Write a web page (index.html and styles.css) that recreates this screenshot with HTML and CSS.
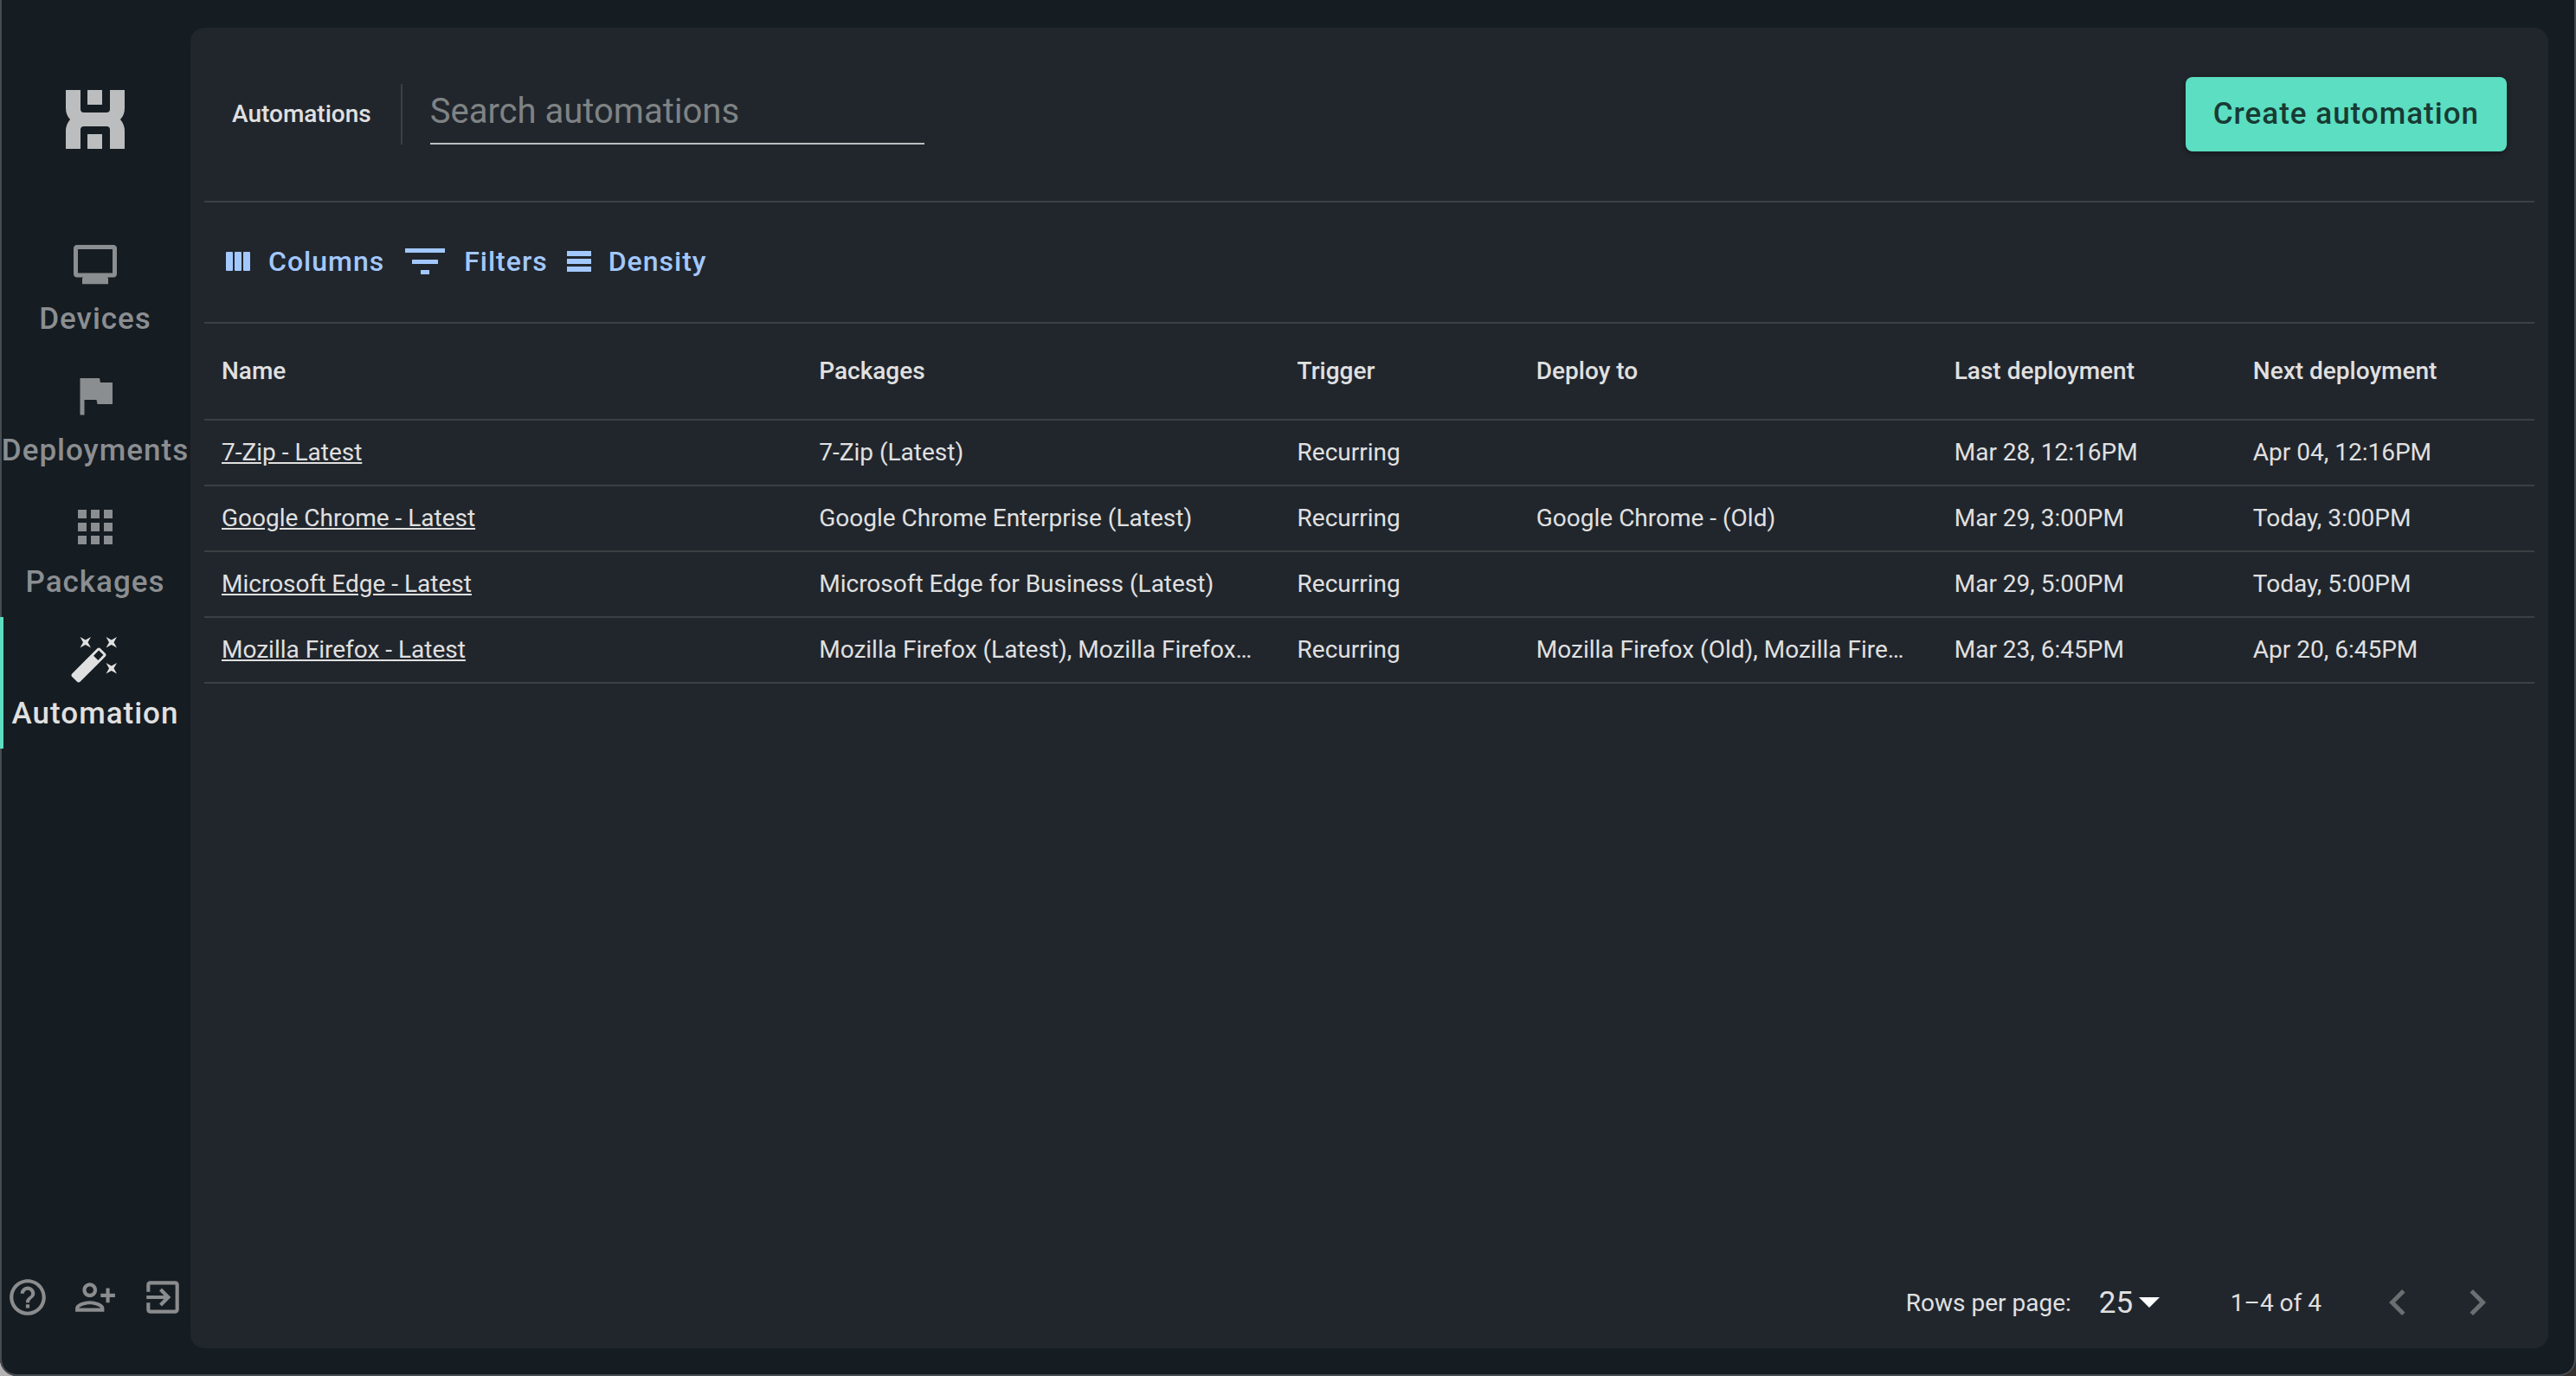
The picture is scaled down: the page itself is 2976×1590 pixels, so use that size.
FILE: index.html
```html
<!DOCTYPE html>
<html lang="en">
<head>
  <meta charset="UTF-8">
  <meta name="viewport" content="width=device-width, initial-scale=1.0">
  <title>Automations</title>
  <link rel="stylesheet" href="styles.css">
</head>
<body>

<div class="window">
  <!-- Sidebar -->
  <aside class="sidebar">
    <a href="#" class="logo" aria-label="Home">
      <svg width="68" height="68" viewBox="0 0 68 68">
        <path d="M0 0H17V22Q17 26 21 26H47Q51 26 51 22V0H68V21Q68 29 63 34Q68 40 68 47V68H51V46Q51 42 47 42H21Q17 42 17 46V68H0V47Q0 40 5 34Q0 29 0 21Z"/>
        <path d="M25 0H42V17H25ZM25 51H42V68H25Z"/>
      </svg>
    </a>

    <nav class="nav">
      <a href="#" class="nav-item">
        <svg class="icon" viewBox="0 0 24 24"><path d="M20.500 3.200h-17C2.700 3.200 2 3.900 2 4.700v12c0 .8.700 1.500 1.500 1.500h2.900L6 18.700v2.600h12v-2.600l-.4-.5h2.900c.8 0 1.500-.7 1.500-1.500v-12C22 3.900 21.300 3.200 20.500 3.200zM20 16.200H4v-11h16v11z"/></svg>
        <span>Devices</span>
      </a>
      <a href="#" class="nav-item">
        <svg class="icon" viewBox="0 0 24 24"><path d="M14.4 6L14 4H5v17h2v-7h5.600l.4 2h7V6z"/></svg>
        <span>Deployments</span>
      </a>
      <a href="#" class="nav-item">
        <svg class="icon" viewBox="0 0 24 24"><path d="M4 8h4V4H4v4zm6 12h4v-4h-4v4zm-6 0h4v-4H4v4zm0-6h4v-4H4v4zm6 0h4v-4h-4v4zm6-10v4h4V4h-4zm-6 4h4V4h-4v4zm6 6h4v-4h-4v4zm0 6h4v-4h-4v4z"/></svg>
        <span>Packages</span>
      </a>
      <a href="#" class="nav-item active">
        <svg class="icon" viewBox="0 0 24 24"><path d="M7.5,5.6L5,7L6.4,4.5L5,2L7.5,3.4L10,2L8.6,4.5L10,7L7.5,5.6M19.5,15.4L22,14L20.6,16.5L22,19L19.5,17.6L17,19L18.4,16.5L17,14L19.5,15.4M22,2L20.6,4.5L22,7L19.5,5.6L17,7L18.4,4.5L17,2L19.5,3.4L22,2M13.34,12.78L15.78,10.34L13.66,8.22L11.22,10.66L13.34,12.78M14.37,7.29L16.71,9.63C17.1,10 17.1,10.65 16.71,11.04L5.04,22.71C4.65,23.1 4,23.1 3.63,22.71L1.29,20.37C0.9,20 0.9,19.35 1.29,18.96L12.96,7.29C13.35,6.9 14,6.9 14.37,7.29Z"/></svg>
        <span>Automation</span>
      </a>
    </nav>

    <div class="sidebar-actions">
      <button type="button" aria-label="Help">
        <svg viewBox="0 0 24 24"><path d="M11 18h2v-2h-2v2zm1-16C6.480 2 2 6.480 2 12s4.480 10 10 10 10-4.480 10-10S17.520 2 12 2zm0 18c-4.410 0-8-3.590-8-8s3.590-8 8-8 8 3.590 8 8-3.590 8-8 8zm0-14c-2.210 0-4 1.790-4 4h2c0-1.100.9-2 2-2s2 .9 2 2c0 2-3 1.750-3 5h2c0-2.250 3-2.500 3-5 0-2.210-1.790-4-4-4z"/></svg>
      </button>
      <button type="button" aria-label="Invite user">
        <svg viewBox="0 0 24 24"><path d="M13 8c0-2.210-1.790-4-4-4S5 5.790 5 8s1.790 4 4 4 4-1.790 4-4zm-2 0c0 1.100-.9 2-2 2s-2-.9-2-2 .9-2 2-2 2 .9 2 2zM1 18v2h16v-2c0-2.660-5.330-4-8-4s-8 1.340-8 4zm2 0c.2-.71 3.300-2 6-2 2.690 0 5.770 1.280 6 2H3zM20 15v-3h3v-2h-3V7h-2v3h-3v2h3v3h2z"/></svg>
      </button>
      <button type="button" aria-label="Sign out">
        <svg viewBox="0 0 24 24"><path d="M10.090 15.590L11.500 17l5-5-5-5-1.410 1.410L12.670 11H3v2h9.670l-2.580 2.590zM19 3H5c-1.110 0-2 .9-2 2v4h2V5h14v14H5v-4H3v4c0 1.100.89 2 2 2h14c1.100 0 2-.9 2-2V5c0-1.100-.9-2-2-2z"/></svg>
      </button>
    </div>
  </aside>

  <!-- Main panel -->
  <main class="panel">
    <header class="panel-header">
      <h1>Automations</h1>
      <input type="search" class="search" placeholder="Search automations" aria-label="Search automations">
      <button type="button" class="create-btn">Create automation</button>
    </header>

    <div class="toolbar">
      <button type="button">
        <svg width="30" height="22" viewBox="0 0 30 22"><rect x="1" width="8" height="22" rx="1"/><rect x="11" width="8" height="22" rx="1"/><rect x="21" width="8" height="22" rx="1"/></svg>
        Columns
      </button>
      <button type="button">
        <svg width="50" height="30" viewBox="0 0 50 30"><path d="M2 0H48V5H2ZM10 13H40V18H10ZM20 25H30V30H20Z"/></svg>
        Filters
      </button>
      <button type="button">
        <svg width="28" height="24" viewBox="0 0 28 24"><path d="M0 0H28V6H0ZM0 9H28V15H0ZM0 18H28V24H0Z"/></svg>
        Density
      </button>
    </div>

    <table class="grid">
      <colgroup>
        <col class="col-name">
        <col class="col-packages">
        <col class="col-trigger">
        <col class="col-deploy">
        <col class="col-date">
        <col class="col-date">
      </colgroup>
      <thead>
        <tr>
          <th>Name</th>
          <th>Packages</th>
          <th>Trigger</th>
          <th>Deploy to</th>
          <th>Last deployment</th>
          <th>Next deployment</th>
        </tr>
      </thead>
      <tbody>
        <tr>
          <td><a href="#">7-Zip - Latest</a></td>
          <td>7-Zip (Latest)</td>
          <td>Recurring</td>
          <td></td>
          <td>Mar 28, 12:16PM</td>
          <td>Apr 04, 12:16PM</td>
        </tr>
        <tr>
          <td><a href="#">Google Chrome - Latest</a></td>
          <td>Google Chrome Enterprise (Latest)</td>
          <td>Recurring</td>
          <td>Google Chrome - (Old)</td>
          <td>Mar 29, 3:00PM</td>
          <td>Today, 3:00PM</td>
        </tr>
        <tr>
          <td><a href="#">Microsoft Edge - Latest</a></td>
          <td>Microsoft Edge for Business (Latest)</td>
          <td>Recurring</td>
          <td></td>
          <td>Mar 29, 5:00PM</td>
          <td>Today, 5:00PM</td>
        </tr>
        <tr>
          <td><a href="#">Mozilla Firefox - Latest</a></td>
          <td>Mozilla Firefox (Latest), Mozilla Firefox…</td>
          <td>Recurring</td>
          <td>Mozilla Firefox (Old), Mozilla Fire…</td>
          <td>Mar 23, 6:45PM</td>
          <td>Apr 20, 6:45PM</td>
        </tr>
      </tbody>
    </table>

    <footer class="pagination">
      <label for="pageSize">Rows per page:</label>
      <div class="select-wrap">
        <select id="pageSize">
          <option>25</option>
          <option>50</option>
        </select>
        <svg width="24" height="12" viewBox="0 0 24 12"><path d="M0 0H24L12 12Z"/></svg>
      </div>
      <span class="range">1–4 of 4</span>
      <div class="pager">
        <button type="button" disabled aria-label="Previous page">
          <svg class="icon" viewBox="0 0 24 24"><path d="M15.410 16.590L10.830 12l4.580-4.590L14 6l-6 6 6 6 1.410-1.410z"/></svg>
        </button>
        <button type="button" disabled aria-label="Next page">
          <svg class="icon" viewBox="0 0 24 24"><path d="M8.590 16.590L13.170 12 8.590 7.410 10 6l6 6-6 6-1.410-1.410z"/></svg>
        </button>
      </div>
    </footer>
  </main>
</div>

</body>
</html>
```
FILE: styles.css
```css
* {
  box-sizing: border-box;
}
body {
  margin: 0;
  background: linear-gradient(90deg, #b4b2b2, #35312f);
  color: #e0e0e0;
  font-family: Roboto, sans-serif;
  font-size: 28px;
}
button {
  border: none;
  background: none;
  padding: 0;
  color: inherit;
  font-family: inherit;
  cursor: pointer;
}
svg {
  display: block;
  flex-shrink: 0;
  fill: currentColor;
}
.icon {
  width: 60px;
  height: 60px;
}

/* Window */
.window {
  display: flex;
  min-height: 100vh;
  padding: 32px 32px 32px 0;
  background: #151c22;
  border-radius: 0 0 20px 20px;
  box-shadow: inset 2px 0 #474c50, inset -2px 0 #474c50, inset 0 -2px #474c50;
}

/* Sidebar */
.sidebar {
  display: flex;
  flex-direction: column;
  width: 220px;
  flex-shrink: 0;
}
.logo {
  align-self: center;
  margin-top: 72px;
  color: #bbbdbf;
}
.nav {
  margin-top: 85px;
}
.nav-item {
  display: flex;
  flex-direction: column;
  align-items: center;
  gap: 12px;
  height: 152px;
  padding-top: 18px;
  color: #8b8e91;
  font-size: 35px;
  font-weight: 500;
  line-height: 44px;
  letter-spacing: 1px;
  text-decoration: none;
}
.nav-item.active {
  color: #e0e0e0;
  box-shadow: inset 4px 0 #5eddc1;
}
.sidebar-actions {
  display: flex;
  justify-content: center;
  gap: 28px;
  margin-top: auto;
  margin-bottom: 34px;
  color: #8b8c8d;
}
.sidebar-actions svg {
  width: 50px;
  height: 50px;
}

/* Main panel */
.panel {
  display: flex;
  flex-direction: column;
  flex: 1;
  min-width: 0;
  padding: 0 16px;
  background: #21262d;
  border-radius: 16px;
}
.panel-header {
  display: flex;
  align-items: center;
  height: 202px;
  padding: 0 32px;
  border-bottom: 2px solid #3b4043;
}
h1 {
  margin: 0;
  padding-right: 34px;
  border-right: 2px solid #3b4043;
  font-size: 28px;
  font-weight: 500;
  line-height: 70px;
}
.search {
  width: 571px;
  height: 70px;
  margin-left: 32px;
  padding: 0 0 6px;
  border: none;
  border-bottom: 2px solid #bcbec0;
  background: none;
  color: #e0e0e0;
  font-family: inherit;
  font-size: 40px;
  outline: none;
}
.search::placeholder {
  color: #7f8384;
  opacity: 1;
}
.create-btn {
  height: 86px;
  margin-left: auto;
  padding: 0 32px 2px;
  border-radius: 8px;
  background: #5bdec1;
  box-shadow: 0 2px 6px rgba(0, 0, 0, 0.4);
  color: #183a33;
  font-size: 35px;
  font-weight: 500;
  letter-spacing: 1px;
}

/* Toolbar */
.toolbar {
  display: flex;
  align-items: center;
  gap: 22px;
  height: 140px;
  padding: 0 24px 2px;
  border-bottom: 2px solid #3b4043;
  color: #a3c8ff;
}
.toolbar button {
  display: flex;
  align-items: center;
  gap: 20px;
  font-size: 32px;
  font-weight: 500;
  letter-spacing: 1px;
}

/* Automations table */
.grid {
  width: 100%;
  table-layout: fixed;
  border-collapse: separate;
  border-spacing: 0;
}
.col-name { width: 25.64%; }
.col-packages { width: 20.52%; }
.col-trigger { width: 10.26%; }
.col-deploy { width: 17.94%; }
.col-date { width: 12.82%; }
.grid th,
.grid td {
  height: 76px;
  padding: 0 20px 2px;
  border-bottom: 2px solid #3b4043;
  text-align: left;
  font-weight: 400;
  white-space: nowrap;
  overflow: hidden;
  text-overflow: ellipsis;
}
.grid th {
  height: 112px;
  font-weight: 500;
}
.grid a {
  color: inherit;
}

/* Pagination */
.pagination {
  display: flex;
  align-items: center;
  justify-content: flex-end;
  height: 106px;
  margin-top: auto;
  padding-right: 36px;
}
.select-wrap {
  display: flex;
  align-items: center;
  gap: 6px;
  margin-left: 32px;
  color: #fff;
}
select {
  appearance: none;
  padding: 0;
  border: none;
  background: none;
  color: #e0e0e0;
  font-family: inherit;
  font-size: 35px;
}
.range {
  margin-left: 82px;
}
.pager {
  display: flex;
  gap: 32px;
  margin-left: 58px;
  color: #6b6f72;
}
```
